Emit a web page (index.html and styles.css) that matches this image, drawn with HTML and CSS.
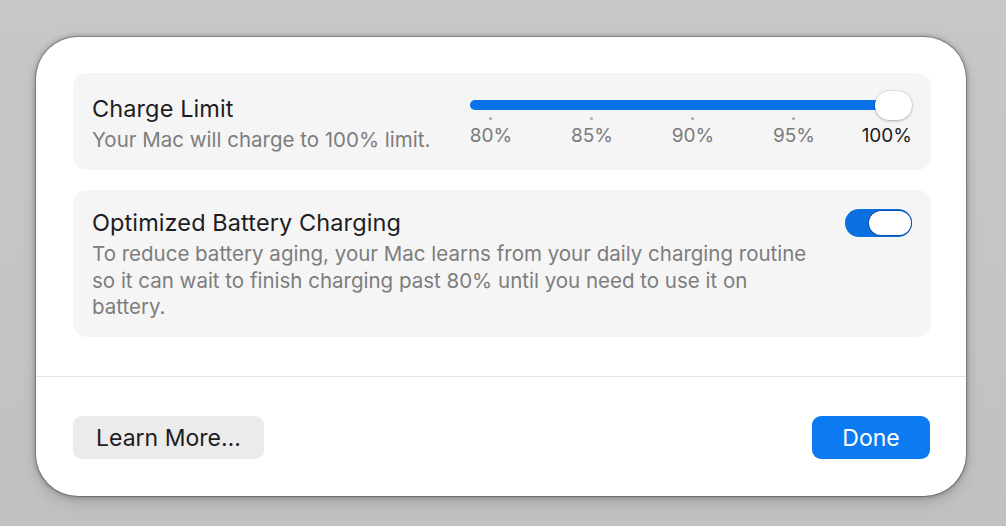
FILE: index.html
```html
<!DOCTYPE html>
<html lang="en">
<head>
<meta charset="utf-8">
<title>Battery Charging</title>
<link rel="stylesheet" href="styles.css">
</head>
<body>
<div class="dialog">
  <div class="content">
    <section class="card card-limit">
      <div class="text">
        <div class="title">Charge Limit</div>
        <div class="sub">Your Mac will charge to 100% limit.</div>
      </div>
      <div class="slider">
        <div class="track"></div>
        <div class="knob"></div>
        <div class="ticks">
          <span class="tick"></span><span class="tick"></span><span class="tick"></span><span class="tick"></span><span class="tick"></span>
        </div>
        <div class="labels">
          <span class="lbl">80%</span>
          <span class="lbl">85%</span>
          <span class="lbl">90%</span>
          <span class="lbl">95%</span>
          <span class="lbl lbl-max">100%</span>
        </div>
      </div>
    </section>
    <section class="card card-opt">
      <div class="text">
        <div class="title">Optimized Battery Charging</div>
        <div class="desc">To reduce battery aging, your Mac learns from your daily charging routine so it can wait to finish charging past 80% until you need to use it on battery.</div>
      </div>
      <div class="toggle"><span class="toggle-knob"></span></div>
    </section>
  </div>
  <div class="footer">
    <button class="btn btn-secondary">Learn More…</button>
    <button class="btn btn-primary">Done</button>
  </div>
</div>
</body>
</html>
```

FILE: styles.css
```css
* { box-sizing: border-box; }
html, body { margin: 0; padding: 0; }
body {
  width: 1006px;
  height: 526px;
  overflow: hidden;
  background: linear-gradient(180deg, #c7c8c6 0%, #c4c5c3 60%, #c0c1bf 100%);
  font-family: Inter, "Noto Sans", "Liberation Sans", sans-serif;
  padding: 37px 0 0 36px;
}
.dialog {
  width: 930px;
  height: 459px;
  background: #ffffff;
  border-radius: 42px;
  box-shadow: 0 0 0 1px rgba(0,0,0,0.2), 0 0 4px 1px rgba(0,0,0,0.25), 0 5px 14px rgba(0,0,0,0.18);
  display: flex;
  flex-direction: column;
  overflow: hidden;
}
.content {
  padding: 36px 35px 39px 37px;
  display: flex;
  flex-direction: column;
  gap: 20px;
  border-bottom: 1px solid #e4e4e4;
}
.card {
  background: #f5f5f5;
  border-radius: 14px;
  display: flex;
  padding: 0 19px;
}
.card-limit { height: 97px; }
.card-limit .text { flex: 1; padding-top: 23px; }
.title {
  font-size: 23.5px;
  line-height: 26px;
  letter-spacing: 0.1px;
  color: #1d1d1f;
}
.sub {
  margin-top: 5.5px;
  font-size: 20.5px;
  line-height: 24px;
  color: #7d7d7d;
}
.slider {
  position: relative;
  width: 442px;
  flex: none;
  padding-top: 27px;
}
.track {
  height: 10px;
  width: 425px;
  border-radius: 5px;
  background: #0a72e8;
}
.knob {
  position: absolute;
  right: 0;
  top: 18px;
  width: 37px;
  height: 29px;
  border-radius: 15px;
  background: #ffffff;
  box-shadow: 0 0 0 0.5px rgba(0,0,0,0.12), 0 1px 3px rgba(0,0,0,0.25);
}
.ticks {
  margin-top: 7px;
  height: 3px;
  display: flex;
  justify-content: space-between;
  padding: 0 16.5px 0 18.5px;
}
.tick {
  width: 3px;
  height: 3px;
  border-radius: 50%;
  background: #a9a9a9;
}
.labels {
  margin-top: 5.5px;
  display: flex;
  gap: 59px;
  font-size: 19px;
  line-height: 20px;
  color: #7a7a7a;
}
.lbl { width: 42px; flex: none; white-space: nowrap; display: flex; justify-content: center; }
.lbl-max { flex: 1 1 0; min-width: 0; width: auto; justify-content: flex-end; color: #1d1d1f; }

.card-opt { height: 147px; padding-top: 20px; }
.card-opt .text { flex: 1; }
.desc {
  margin-top: 5.3px;
  width: 724px;
  font-size: 20.5px;
  line-height: 26.5px;
  color: #7d7d7d;
}
.toggle {
  flex: none;
  margin-top: -1.5px;
  width: 67px;
  height: 28px;
  border-radius: 14px;
  background: #0b6fe0;
  display: flex;
  align-items: center;
  justify-content: flex-end;
  padding-right: 1px;
}
.toggle-knob {
  width: 42px;
  height: 24px;
  border-radius: 12px;
  background: #ffffff;
  box-shadow: 0 0 0 1px rgba(10,60,130,0.6);
}
.footer {
  flex: 1;
  display: flex;
  justify-content: space-between;
  align-items: flex-start;
  padding: 39px 36px 0 37px;
}
.btn {
  height: 43px;
  border: none;
  border-radius: 9px;
  font-family: inherit;
  font-size: 23px;
  line-height: 26px;
  padding: 0;
}
.btn-secondary {
  width: 191px;
  background: #ebebeb;
  color: #1d1d1f;
  text-align: left;
  padding-left: 23px;
}
.btn-primary {
  width: 118px;
  background: #0c7bf2;
  color: #ffffff;
}
```
